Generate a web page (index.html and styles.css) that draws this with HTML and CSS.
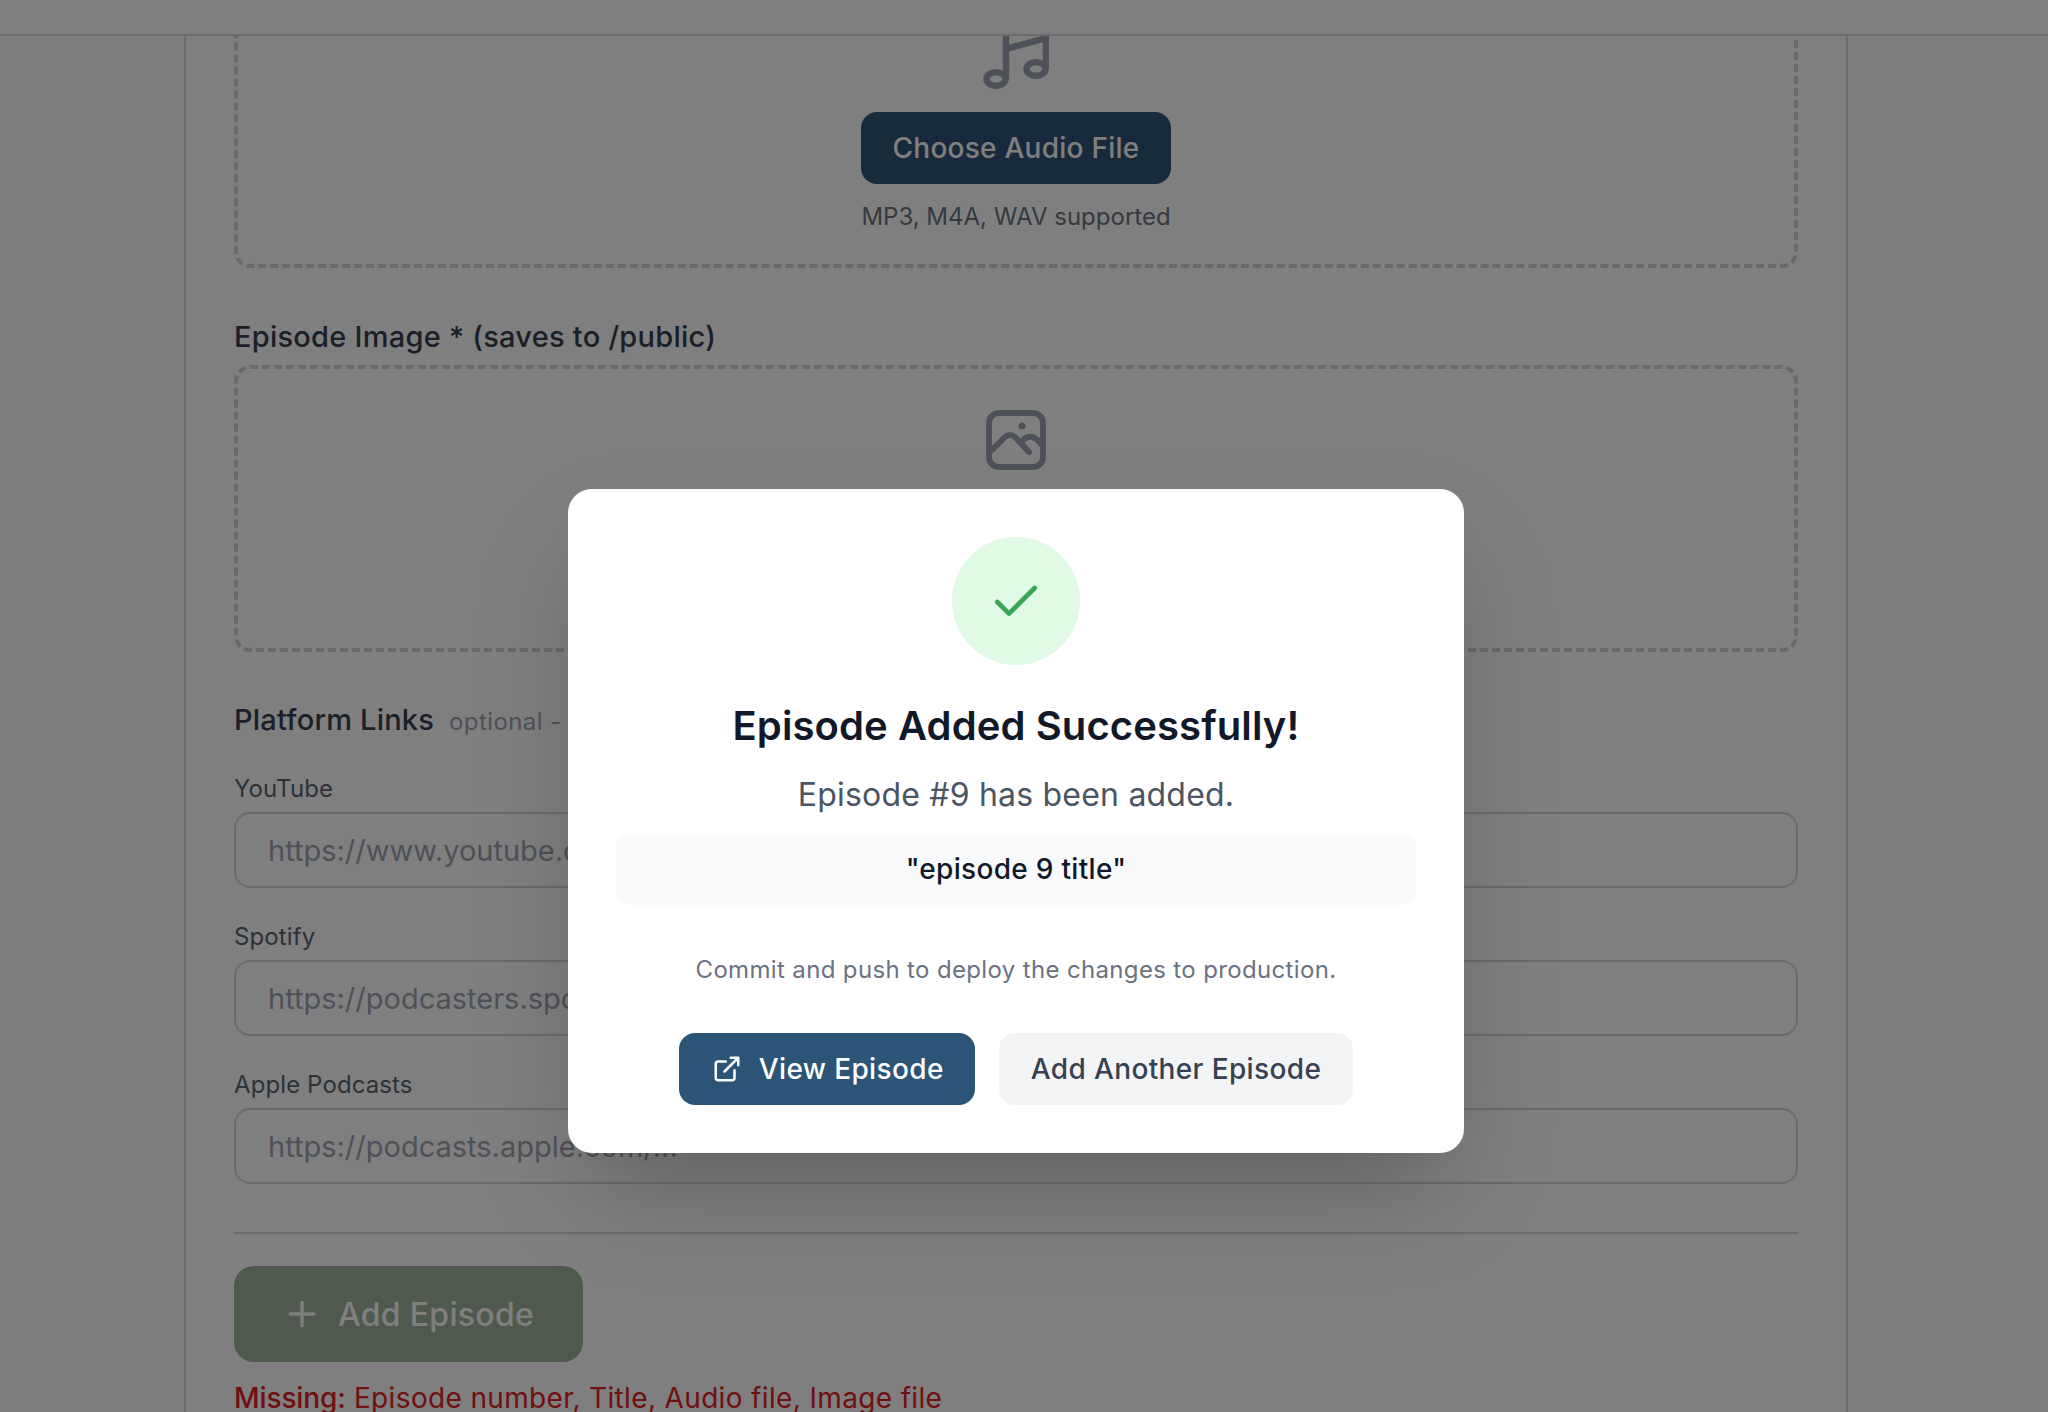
FILE: index.html
```html
<!DOCTYPE html>
<html lang="en">
  <head>
    <meta charset="UTF-8" />
    <title>Add Episode</title>
    <link rel="stylesheet" href="styles.css">
  </head>
  <body>
    <div id="wrap">
      <header class="top-bar"></header>
      <main class="page">
        <div class="card">
          <div class="upload upload-audio">
            <svg class="icon-music" width="66" height="64" viewBox="0 0 66 64" fill="none" stroke="currentColor" stroke-width="6.5">
              <path d="M23 54V8L63 -3V44M23 24L63 13" />
              <ellipse cx="13" cy="54" rx="9.5" ry="6.8" />
              <ellipse cx="53" cy="44" rx="9.5" ry="6.8" />
            </svg>
            <button class="btn-choose">Choose Audio File</button>
            <p class="upload-hint">MP3, M4A, WAV supported</p>
          </div>

          <label class="field-title">Episode Image * (saves to /public)</label>
          <div class="upload upload-image">
            <svg class="icon-image" width="60" height="60" viewBox="0 0 60 60" fill="none" stroke="currentColor" stroke-width="6" stroke-linecap="round">
              <rect x="3" y="3" width="54" height="54" rx="10" />
              <circle cx="36" cy="16" r="3.5" fill="currentColor" stroke="none" />
              <path d="M5 41L19 27Q24 23 29 27L43 42M36 31Q46 21 56 35" />
            </svg>
            <button class="btn-choose">Choose Image File</button>
            <p class="upload-hint">JPG, PNG supported</p>
          </div>

          <div class="links-head">
            <strong>Platform Links</strong>
            <span>optional -</span>
          </div>
          <label class="link-label">YouTube</label>
          <input type="text" class="link-input" placeholder="https://www.youtube.com/..." />
          <label class="link-label">Spotify</label>
          <input type="text" class="link-input" placeholder="https://podcasters.spotify.com/..." />
          <label class="link-label">Apple Podcasts</label>
          <input type="text" class="link-input" placeholder="https://podcasts.apple.com/..." />

          <hr class="divider" />

          <button class="btn-add">
            <svg width="40" height="40" viewBox="0 0 24 24" fill="none" stroke="currentColor" stroke-width="2" stroke-linecap="round">
              <path d="M5 12h14M12 5v14" />
            </svg>
            Add Episode
          </button>
          <p class="missing"><b>Missing:</b> Episode number, Title, Audio file, Image file</p>
        </div>
      </main>

      <div class="overlay">
        <div class="modal">
          <div class="check-circle">
            <svg width="56" height="56" viewBox="0 0 24 24" fill="none" stroke="currentColor" stroke-width="2" stroke-linecap="round" stroke-linejoin="round">
              <path d="M20 6 9 17l-5-5" />
            </svg>
          </div>
          <h2>Episode Added Successfully!</h2>
          <p class="modal-sub">Episode #9 has been added.</p>
          <div class="modal-name">"episode 9 title"</div>
          <p class="modal-note">Commit and push to deploy the changes to production.</p>
          <div class="modal-btns">
            <a class="btn-view">
              <svg width="30" height="30" viewBox="0 0 24 24" fill="none" stroke="currentColor" stroke-width="2" stroke-linecap="round" stroke-linejoin="round">
                <path d="M15 3h6v6M10 14 21 3M18 13v6a2 2 0 0 1-2 2H5a2 2 0 0 1-2-2V8a2 2 0 0 1 2-2h6" />
              </svg>
              View Episode
            </a>
            <a class="btn-another">Add Another Episode</a>
          </div>
        </div>
      </div>
    </div>
  </body>
</html>
```

FILE: styles.css
```css
* {
  box-sizing: border-box;
}
html,
body {
  margin: 0;
  padding: 0;
  height: 100%;
  overflow: hidden;
  font-family: Inter, 'Noto Sans', sans-serif;
  background: #f9fcfb;
}
button {
  font-family: inherit;
  border: 0;
}
p {
  margin: 0;
}
#wrap {
  position: relative;
  height: 1412px;
  overflow: hidden;
}
.top-bar {
  height: 36px;
  background: white;
  border-bottom: 2px solid #d4d6da;
}
.page {
  height: 1376px;
  padding-right: 16px;
  overflow: hidden;
}
.card {
  display: flex;
  flex-direction: column;
  width: 1664px;
  margin: 0 auto;
  padding: 0 48px;
  min-height: 1376px;
  background: white;
  border-left: 2px solid #d9dbdf;
  border-right: 2px solid #d9dbdf;
}
.upload {
  display: flex;
  flex-direction: column;
  align-items: center;
  border: 4px dashed #d1d5db;
  border-radius: 16px;
}
.upload-audio {
  margin-top: -40px;
  padding: 25px 0 29px;
}
.upload-image {
  padding: 41px 0 32px;
}
.icon-music,
.icon-image {
  flex: none;
  margin-bottom: 23px;
  color: #9ca3af;
}
.icon-music {
  overflow: hidden;
}
.btn-choose {
  height: 72px;
  padding: 0 32px;
  font-size: 28px;
  font-weight: 500;
  letter-spacing: 0.25px;
  color: white;
  background: #2c5477;
  border-radius: 16px;
}
.upload-hint {
  margin-top: 15px;
  font-size: 24px;
  line-height: 36px;
  color: #6b7280;
}
.field-title {
  margin: 49px 0 8px;
  font-size: 29px;
  line-height: 40px;
  font-weight: 500;
  letter-spacing: 0.25px;
  color: #374151;
}
.links-head {
  display: flex;
  align-items: baseline;
  gap: 15px;
  height: 40px;
  margin-top: 48px;
  line-height: 40px;
}
.links-head strong {
  font-size: 29px;
  font-weight: 500;
  letter-spacing: 0.2px;
  color: #374151;
}
.links-head span {
  font-size: 24px;
  letter-spacing: 0.4px;
  color: #9ca3af;
}
.link-label {
  margin: 31px 0 5px;
  font-size: 24px;
  line-height: 36px;
  letter-spacing: 0.1px;
  color: #5b6472;
}
.link-input {
  height: 76px;
  padding: 0 32px;
  font-family: inherit;
  font-size: 29px;
  color: #111827;
  background: white;
  border: 2px solid #d1d5db;
  border-radius: 16px;
}
.link-input::placeholder {
  color: #9ca3af;
}
.divider {
  flex: none;
  width: 100%;
  height: 2px;
  margin: 48px 0 32px;
  border: 0;
  background: #d9dbdf;
}
.btn-add {
  display: flex;
  align-items: center;
  gap: 16px;
  align-self: flex-start;
  height: 96px;
  padding: 0 49px 0 48px;
  font-size: 32px;
  font-weight: 500;
  letter-spacing: 0.3px;
  color: #fff;
  background: #9eb29a;
  border-radius: 20px;
}
.missing {
  margin-top: 22px;
  font-size: 28px;
  line-height: 28px;
  letter-spacing: 0.35px;
  color: #e02020;
}
.missing b {
  font-weight: 500;
  letter-spacing: -0.1px;
}
.overlay {
  position: absolute;
  left: 0;
  top: 0;
  right: 0;
  bottom: 0;
  display: flex;
  justify-content: center;
  align-items: flex-start;
  padding: 489px 16px 0 0;
  background: rgba(0, 0, 0, 0.5);
}
.modal {
  display: flex;
  flex-direction: column;
  align-items: center;
  width: 896px;
  padding: 48px;
  text-align: center;
  background: white;
  border-radius: 24px;
  box-shadow: 0 50px 100px -24px rgba(0, 0, 0, 0.25);
}
.check-circle {
  display: flex;
  justify-content: center;
  align-items: center;
  width: 128px;
  height: 128px;
  margin-bottom: 33px;
  color: #3aa655;
  background: #e0fae5;
  border-radius: 100%;
}
.check-circle svg {
  margin-top: 2px;
}
.modal h2 {
  margin: 0 0 1px;
  font-size: 40px;
  line-height: 56px;
  font-weight: 600;
  letter-spacing: 0.1px;
  color: #111827;
}
.modal-sub {
  margin-top: 18px;
  font-size: 32px;
  line-height: 44px;
  letter-spacing: 0.2px;
  color: #4b5563;
}
.modal-name {
  width: 100%;
  height: 72px;
  margin-top: 16px;
  font-size: 28px;
  line-height: 72px;
  font-weight: 500;
  letter-spacing: 0.3px;
  color: #111827;
  background: #f9fafb;
  border-radius: 12px;
}
.modal-note {
  margin-top: 47px;
  font-size: 24px;
  line-height: 36px;
  letter-spacing: 0.35px;
  color: #6b7280;
}
.modal-btns {
  display: flex;
  gap: 24px;
  margin-top: 45px;
}
.btn-view,
.btn-another {
  display: flex;
  align-items: center;
  height: 72px;
  padding: 0 32px;
  font-size: 28px;
  font-weight: 500;
  letter-spacing: 0.37px;
  border-radius: 16px;
}
.btn-view {
  gap: 17px;
  padding: 0 31px 0 33px;
  color: white;
  background: #2c5477;
}
.btn-another {
  color: #374151;
  background: #f3f4f6;
}
```
